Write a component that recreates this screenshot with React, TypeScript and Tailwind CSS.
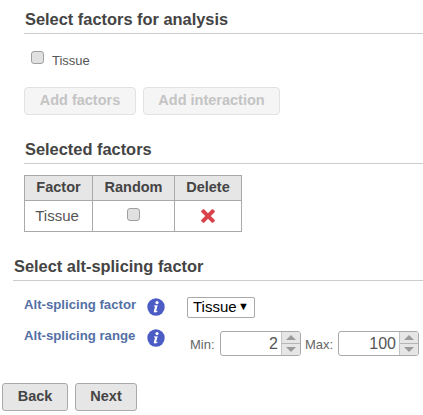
const font = { fontFamily: '"Liberation Sans", Arial, sans-serif' };

function SectionHeading({ title, indent = 'ml-6' }: { title: string; indent?: string }) {
  return (
    <div className={`${indent} border-b border-[#cccccc] pb-[5px] pl-px`}>
      <h2 className="text-[16.4px] leading-[18px] font-bold text-[#444444]">{title}</h2>
    </div>
  );
}

function Checkbox() {
  return <span className="block w-[13px] h-[13px] rounded-[3px] border border-[#a0a0a0] bg-[#e0e0e0]" />;
}

function InfoIcon() {
  return (
    <svg width="18" height="18" viewBox="0 0 18 18">
      <circle cx="9" cy="9" r="8.7" fill="#4b5cc4" />
      <circle cx="10" cy="4.6" r="1.6" fill="#ffffff" />
      <path d="M6.9 7.6 L10.7 7.2 L9.2 12.6 Q9 13.5 10.6 12.7 L10.7 13.3 Q9.2 14.6 7.7 14.5 Q6.4 14.3 6.9 12.8 L8 9 Q8.1 8.2 6.9 8.3 Z" fill="#ffffff" />
    </svg>
  );
}

function Spinner({ value }: { value: string }) {
  return (
    <div className="flex w-[81px] h-[25px] rounded-[3px] border border-[#a9a9a9] bg-white overflow-hidden">
      <span className="flex-1 text-right text-[16px] leading-[23px] text-[#555555] pr-[3px]">{value}</span>
      <div className="flex flex-col w-[19px] border-l border-[#c4c4c4] bg-[#e6e6e6]">
        <div className="flex-1 flex items-center justify-center border-b border-[#b5b5b5]">
          <span className="w-0 h-0 border-x-[5px] border-x-transparent border-b-[5px] border-b-[#9a9a9a]" />
        </div>
        <div className="flex-1 flex items-center justify-center">
          <span className="w-0 h-0 border-x-[5px] border-x-transparent border-t-[5px] border-t-[#9a9a9a]" />
        </div>
      </div>
    </div>
  );
}

export default function App() {
  return (
    <div style={font} className="w-[423px] h-[415px] bg-white overflow-hidden pt-[10px]">
      <SectionHeading title="Select factors for analysis" />

      <label className="flex items-center ml-[31px] mt-[18px] h-[16px]">
        <span className="-mt-[6px]">
          <Checkbox />
        </span>
        <span className="ml-[8px] mt-[1px] text-[13px] text-[#555555]">Tissue</span>
      </label>

      <div className="flex gap-[7px] ml-6 mt-[19px]">
        <button className="h-[28px] w-[112px] rounded-[4px] border border-[#e2e2e2] bg-[#f5f5f5] text-[14.5px] font-bold text-[#c4c4c4]">
          Add factors
        </button>
        <button className="h-[28px] w-[137px] rounded-[4px] border border-[#e2e2e2] bg-[#f5f5f5] text-[14.5px] font-bold text-[#c4c4c4]">
          Add interaction
        </button>
      </div>

      <div className="mt-[25px]">
        <SectionHeading title="Selected factors" />
      </div>

      <table className="ml-6 mt-[11px] border-collapse text-[14.5px] text-[#555555]">
        <thead>
          <tr className="h-[25px] bg-[#e6e6e6]">
            <th className="w-[68px] border border-[#aaaaaa] font-bold text-[#444444]">Factor</th>
            <th className="w-[82px] border border-[#aaaaaa] font-bold text-[#444444]">Random</th>
            <th className="w-[67px] border border-[#aaaaaa] font-bold text-[#444444]">Delete</th>
          </tr>
        </thead>
        <tbody>
          <tr className="h-[31px]">
            <td className="border border-[#aaaaaa] text-center text-[15px] pr-[3px]">Tissue</td>
            <td className="border border-[#aaaaaa]">
              <div className="flex justify-center -mt-[3px]">
                <Checkbox />
              </div>
            </td>
            <td className="border border-[#aaaaaa]">
              <div className="flex justify-center">
                <svg width="14" height="14" viewBox="0 0 14 14">
                  <path d="M2.6 2.6 L11.4 11.4 M11.4 2.6 L2.6 11.4" stroke="#d9434a" strokeWidth="4" strokeLinecap="square" />
                </svg>
              </div>
            </td>
          </tr>
        </tbody>
      </table>

      <div className="mt-[25px]">
        <SectionHeading title="Select alt-splicing factor" indent="ml-[13px]" />
      </div>

      <div className="flex ml-[24px] mt-[10px]">
        <div className="flex flex-col w-[163px]">
          <div className="flex items-center h-[31px]">
            <span className="w-[123px] -mt-[4px] text-[13.2px] font-bold text-[#5470a4]">Alt-splicing factor</span>
            <InfoIcon />
          </div>
          <div className="flex items-center h-[31px]">
            <span className="w-[123px] -mt-[3px] text-[13.2px] font-bold text-[#5470a4]">Alt-splicing range</span>
            <InfoIcon />
          </div>
        </div>
        <div className="flex flex-col">
          <div className="flex items-center justify-between w-[68px] h-[21px] mt-[6px] pl-[5px] pr-[5px] border border-[#a9a9a9] rounded-[2px] text-[15px] text-black">
            <span>Tissue</span>
            <span className="text-[11px] leading-none -mt-[2px]">▼</span>
          </div>
          <div className="flex items-center mt-[13px] ml-[3px] text-[13px] text-[#666666]">
            <span className="mt-[3px] w-[30px]">Min:</span>
            <Spinner value="2" />
            <span className="mt-[3px] ml-[4px] w-[33px]">Max:</span>
            <Spinner value="100" />
          </div>
        </div>
      </div>

      <div className="flex gap-[7px] ml-[2px] mt-[27px]">
        <button className="w-[66px] h-[28px] rounded-[3px] border border-[#aaaaaa] bg-[#e6e6e6] text-[14.5px] font-bold text-[#444444]">
          Back
        </button>
        <button className="w-[62px] h-[28px] rounded-[3px] border border-[#aaaaaa] bg-[#e6e6e6] text-[14.5px] font-bold text-[#444444]">
          Next
        </button>
      </div>
    </div>
  );
}
